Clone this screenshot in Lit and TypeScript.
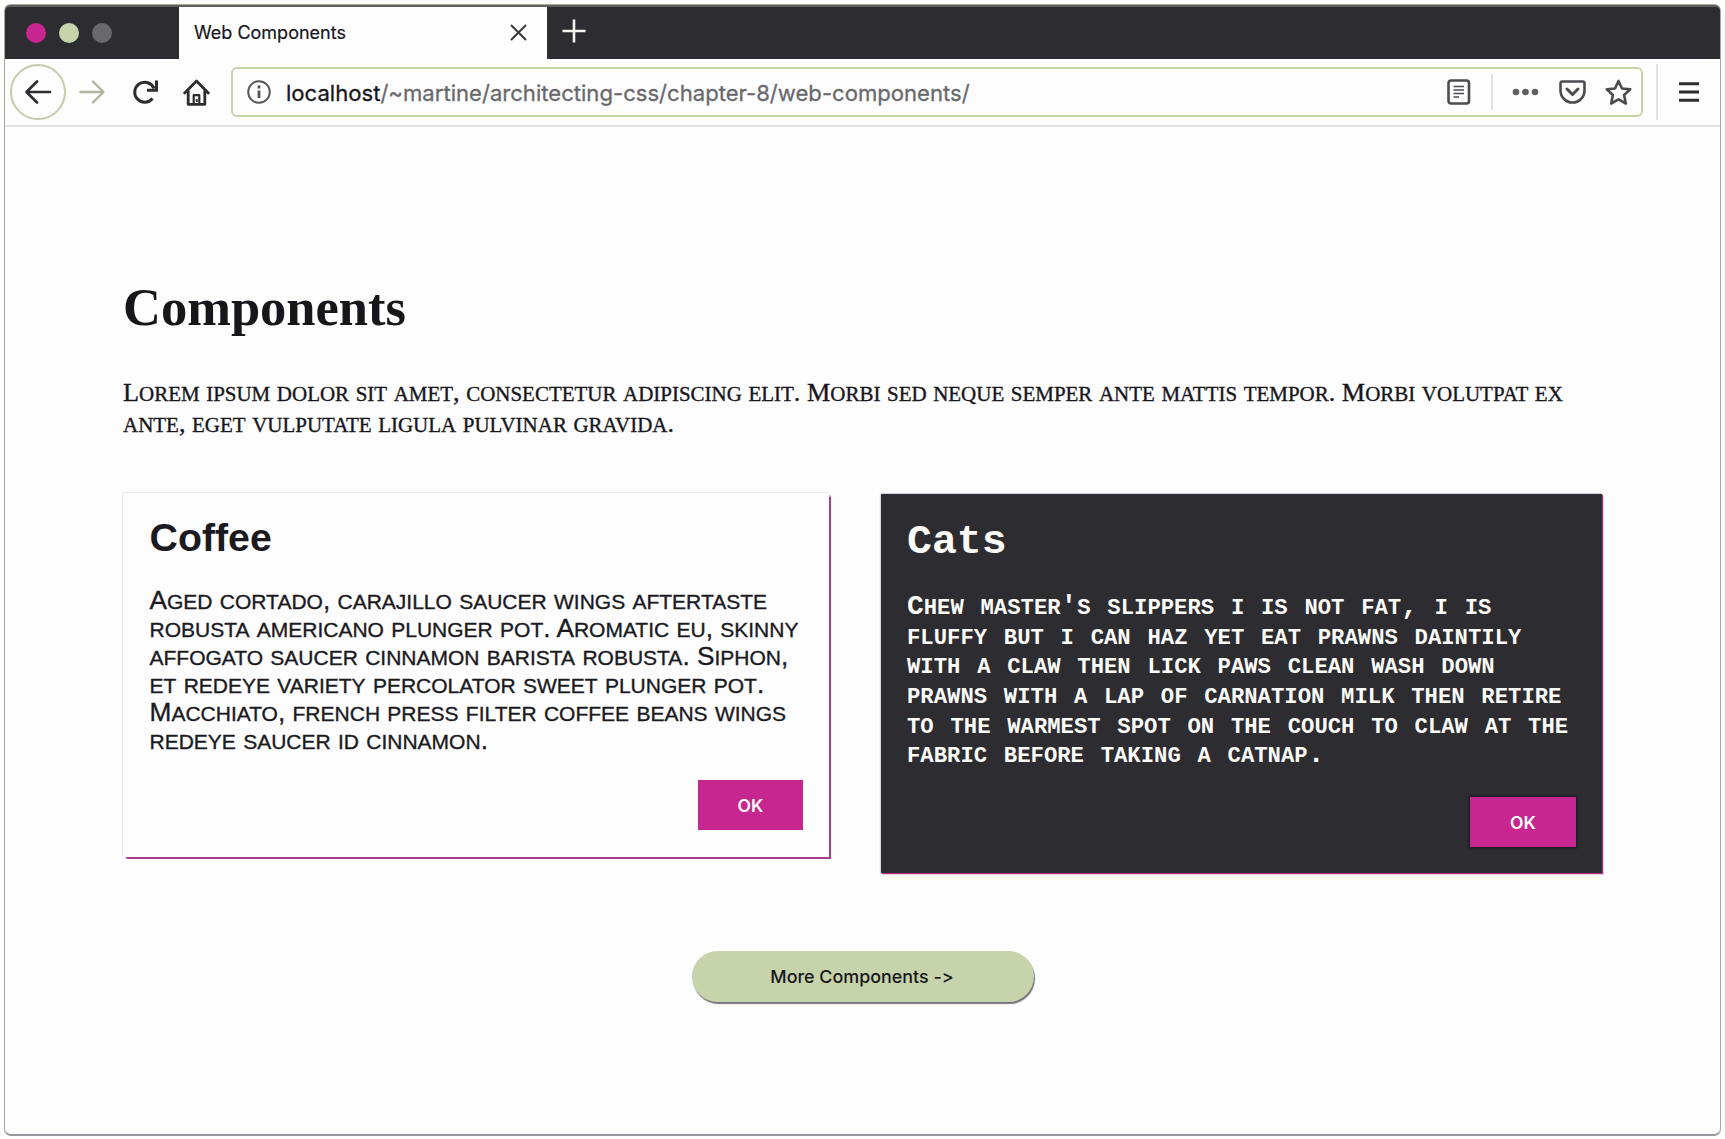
import { LitElement, html, css } from "lit";
import { customElement, property } from "lit/decorators.js";

// Small capitals at 80% of the body size; spaces and punctuation keep the full size.
const smallCaps = (text: string) =>
  text
    .split(/([a-z]+)/)
    .map((run) => (/^[a-z]/.test(run) ? html`<span class="sc">${run}</span>` : run));

const lines = (rows: string[]) => rows.map((row) => html`<span class="line">${smallCaps(row)}</span>`);

const capsStyles = css`
  .sc { font-size: 0.8em; text-transform: uppercase; line-height: 1; }
  .line { display: block; white-space: nowrap; }
`;

@customElement("browser-bar")
class BrowserBar extends LitElement {
  static styles = css`
    :host { display: block; font-family: Inter, "Liberation Sans", sans-serif; color: #17161b; }
    svg { display: block; fill: none; flex: none; }
    .tabs { display: flex; height: 54px; box-sizing: border-box; background: #2d2c31; border-top: 2px solid #5f605c; border-radius: 5px 5px 0 0; }
    .lights { display: flex; width: 174px; box-sizing: border-box; gap: 13px; padding: 16px 0 0 21px; }
    .light { width: 20px; height: 20px; border-radius: 50%; }
    .pink { background: #c7258f; }
    .green { background: #c7d3aa; }
    .gray { background: #69696b; }
    .tab { display: flex; align-items: center; justify-content: space-between; width: 368px; box-sizing: border-box; padding: 0 20px 1px 15px; background: #fdfdfd; font-size: 18px; -webkit-text-stroke: 0.2px; }
    .title { display: block; }
    .plus { margin: 12px 0 0 15px; }
    .tools { display: flex; align-items: center; height: 68px; box-sizing: border-box; border-bottom: 2px solid #e4e1e5; background: #fdfdfd; padding-left: 5px; }
    .back { display: flex; align-items: center; justify-content: center; width: 56px; height: 56px; box-sizing: border-box; border: 2px solid #c3cda9; border-radius: 50%; }
    .fwd { margin-left: 13px; }
    .reload { margin-left: 27px; }
    .home { margin-left: 24px; }
    .url { display: flex; align-items: center; width: 1412px; height: 50px; box-sizing: border-box; margin-left: 21px; padding: 0 9px 0 14px; border: 2px solid #c7d3aa; border-radius: 6px; background: #fdfdfd; }
    .address { flex: 1; margin-left: 15px; padding-top: 2px; font-size: 22.1px; color: #69696b; white-space: nowrap; -webkit-text-stroke: 0.3px; }
    .host { color: #17161b; }
    .rule { width: 2px; height: 36px; background: #e4e1e5; margin: 0 19px 0 20.5px; }
    .gap { margin-left: 19.5px; }
    .tall { width: 2px; height: 56px; margin: 0 20px 0 13px; background: #e4e1e5; }
  `;

  render() {
    return html`
      <div class="tabs">
        <div class="lights">
          <span class="light pink"></span><span class="light green"></span><span class="light gray"></span>
        </div>
        <div class="tab">
          <span class="title">Web Components</span>
          <svg width="17" height="17" stroke="#3a393d" stroke-width="2"><path d="M1 1L16 16M16 1L1 16" /></svg>
        </div>
        <svg class="plus" width="24" height="24" stroke="#f3f4ee" stroke-width="2.6"><path d="M12 .5V23.5M.5 12H23.5" /></svg>
      </div>
      <div class="tools">
        <span class="back">
          <svg width="28" height="24" stroke="#2d2c31" stroke-width="2.6" stroke-linecap="round" stroke-linejoin="round"><path d="M26 12H2.5M13 1.5L2.5 12L13 22.5" /></svg>
        </span>
        <svg class="fwd" width="26" height="24" stroke="#b0b69f" stroke-width="2.4" stroke-linecap="round" stroke-linejoin="round"><path d="M1.5 12H24M14 1.5L24.5 12L14 22.5" /></svg>
        <svg class="reload" width="27" height="26" stroke="#2d2c31" stroke-width="3"><path d="M20.5 19.5A10 10 0 1 1 22 9.5" /><path d="M24.5 1.5V11.2H15" /></svg>
        <svg class="home" width="27" height="27" stroke="#2d2c31" stroke-width="2.8" stroke-linejoin="round" stroke-linecap="round"><path d="M1.7 14L13.5 2L25.3 14M5.2 12V25.3H21.8V12" /><path d="M10.7 25V16.2H16.3V25M13.8 21V22" stroke-width="2.2" /></svg>
        <div class="url">
          <svg width="24" height="24" stroke="#55555a" stroke-width="1.9"><circle cx="12" cy="12" r="10.8" /><path d="M12 10.5V18M12 5.5V8.5" stroke-width="2.8" /></svg>
          <span class="address"><span class="host">localhost</span>/~martine/architecting-css/chapter-8/web-components/</span>
          <svg width="24" height="26" stroke="#4c4b50" stroke-width="2.6"><rect x="1.5" y="1.5" width="20.5" height="23" rx="2.5" /><path d="M6.5 7.5H17M6.5 11H17M6.5 14.5H17M6.5 18H12" stroke-width="1.7" /></svg>
          <span class="rule"></span>
          <svg width="27" height="8" fill="#5f5f62"><circle cx="4" cy="4" r="3.3" fill="#5f5f62" /><circle cx="13.5" cy="4" r="3.3" fill="#5f5f62" /><circle cx="23" cy="4" r="3.3" fill="#5f5f62" /></svg>
          <svg class="gap" width="27" height="24" stroke="#4c4b50" stroke-width="2.6" stroke-linejoin="round" stroke-linecap="round"><path d="M3.5 1.5H23.5Q25.5 1.5 25.5 3.5V10.5A12 12 0 0 1 1.5 10.5V3.5Q1.5 1.5 3.5 1.5Z" /><path d="M8 9L13.5 14.5L19 9" stroke-width="3" /></svg>
          <svg class="gap" width="27" height="27" stroke="#4c4b50" stroke-width="2.6" stroke-linejoin="round"><path d="M13.5 2L17 9.5L25.2 10.4L19.1 16L20.8 24.5L13.5 20.3L6.2 24.5L7.9 16L1.8 10.4L10 9.5Z" /></svg>
        </div>
        <span class="tall"></span>
        <svg width="22" height="22" stroke="#2d2c31" stroke-width="3"><path d="M1 2.7H21M1 11H21M1 19.3H21" /></svg>
      </div>
    `;
  }
}

@customElement("info-card")
class InfoCard extends LitElement {
  @property() heading = "";
  @property({ attribute: false }) rows: string[] = [];

  static styles = [
    capsStyles,
    css`
      :host { display: flex; flex-direction: column; box-sizing: border-box; }
      :host(.coffee) { width: 706px; height: 364px; padding: 24.5px 26px 0 26.5px; background: #fdfdfd; color: #1b1a1f; font-family: "Liberation Sans", sans-serif; box-shadow: 1px 1px 1px 0.5px #a8518e, 0 0 2px #c9c6ca; clip-path: inset(-1px -3px -3px -1px); }
      :host(.cats) { width: 721px; height: 379px; padding: 28px 26px 0 26px; background: #2d2c31; color: #fbfbf8; font-family: "Liberation Mono", monospace; box-shadow: 1px 1px 0 #c7258f, 2px 2px 1px #dcd8dc, 0 0 2px #8c8a8e; font-weight: 700; }
      .name { margin: 0; font-size: 39.3px; line-height: 40px; font-weight: 700; }
      .copy { font-size: 26.25px; line-height: 27.9px; margin: 30px 0 0; -webkit-text-stroke: 0.35px; }
      :host(.coffee) { box-shadow: 1.5px 1.5px 1px #a63c84, 0 0 2px #c9c6ca; }
      :host(.cats) .name { font-size: 41.5px; }
      :host(.cats) .copy { font-size: 27.83px; line-height: 29.6px; margin: 30.7px 0 0; -webkit-text-stroke: 0; }
      .ok { align-self: flex-end; margin: 26px 0 0; width: 105px; height: 50px; border: 0; padding: 0; background: #c7258f; color: #fdfdfd; font: 600 17.5px Inter, sans-serif; }
      :host(.cats) .ok { margin-top: 27.5px; width: 106px; box-shadow: 0 0 2px 1px #17161b; }
    `,
  ];

  render() {
    return html`
      <h2 class="name">${this.heading}</h2>
      <p class="copy">${lines(this.rows)}</p>
      <button class="ok">OK</button>
    `;
  }
}

@customElement("app-root")
class AppRoot extends LitElement {
  static styles = [
    capsStyles,
    css`
      :host { display: block; box-sizing: border-box; height: 1139px; padding: 4px 4px 3px; background: #fefefe; overflow: hidden; }
      .window { height: 1132px; box-sizing: border-box; border: 1px solid #a5aa98; border-bottom: 2px solid #98979b; border-radius: 7px; background: #fdfdfd; }
      .page { display: flex; flex-direction: column; padding: 0 0 0 118px; color: #17161b; font-family: "Liberation Serif", serif; }
      .title { margin: 150px 0 0; font-size: 52.5px; line-height: 60px; font-weight: 700; }
      .intro { margin: 39.5px 0 0; font-size: 26.22px; line-height: 31.5px; -webkit-text-stroke: 0.35px; }
      .cards { display: flex; align-items: flex-start; gap: 52px; margin-top: 53px; }
      .cats { margin-top: 1px; }
      .more { margin: 78.5px 0 0 569px; width: 342px; height: 51px; padding: 0 2px 0 0; border: 0; border-radius: 26px; background: #c7d3aa; color: #17161b; font: 500 17.9px Inter, sans-serif; font-feature-settings: "calt" 0; box-shadow: 1px 2px 1px #77757a; }
    `,
  ];

  render() {
    return html`
      <div class="window">
        <browser-bar></browser-bar>
        <main class="page">
          <h1 class="title">Components</h1>
          <p class="intro">
            ${lines([
              "Lorem ipsum dolor sit amet, consectetur adipiscing elit. Morbi sed neque semper ante mattis tempor. Morbi volutpat ex",
              "ante, eget vulputate ligula pulvinar gravida.",
            ])}
          </p>
          <div class="cards">
            <info-card
              class="coffee"
              heading="Coffee"
              .rows=${[
                "Aged cortado, carajillo saucer wings aftertaste",
                "robusta americano plunger pot. Aromatic eu, skinny",
                "affogato saucer cinnamon barista robusta. Siphon,",
                "et redeye variety percolator sweet plunger pot.",
                "Macchiato, french press filter coffee beans wings",
                "redeye saucer id cinnamon.",
              ]}
            ></info-card>
            <info-card
              class="cats"
              heading="Cats"
              .rows=${[
                "Chew master's slippers i is not fat, i is",
                "fluffy but i can haz yet eat prawns daintily",
                "with a claw then lick paws clean wash down",
                "prawns with a lap of carnation milk then retire",
                "to the warmest spot on the couch to claw at the",
                "fabric before taking a catnap.",
              ]}
            ></info-card>
          </div>
          <button class="more">More Components -&gt;</button>
        </main>
      </div>
    `;
  }
}
